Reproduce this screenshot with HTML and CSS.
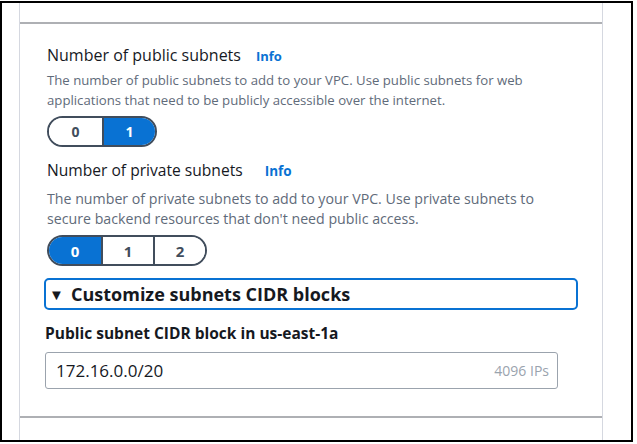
FILE: index.html
```html
<!DOCTYPE html>
<html lang="en">
<head>
<meta charset="utf-8">
<title>VPC subnets</title>
<link rel="stylesheet" href="styles.css">
</head>
<body>
<div class="frame">
  <div class="panel">
    <div class="panel-top"></div>
    <div class="section">
      <div class="field">
        <div class="label-row"><span class="label">Number of public subnets</span><a class="info">Info</a></div>
        <p class="desc">The number of public subnets to add to your VPC. Use public subnets for web<br>applications that need to be publicly accessible over the internet.</p>
        <div class="seg">
          <button class="seg-btn">0</button>
          <button class="seg-btn active">1</button>
        </div>
      </div>
      <div class="field field-2">
        <div class="label-row"><span class="label">Number of private subnets</span><a class="info">Info</a></div>
        <p class="desc">The number of private subnets to add to your VPC. Use private subnets to<br>secure backend resources that don't need public access.</p>
        <div class="seg">
          <button class="seg-btn active">0</button>
          <button class="seg-btn">1</button>
          <button class="seg-btn">2</button>
        </div>
      </div>
      <div class="expander"><span class="caret">&#9660;</span><span class="exp-title">Customize subnets CIDR blocks</span></div>
      <div class="cidr">
        <div class="cidr-label">Public subnet CIDR block in us-east-1a</div>
        <div class="input"><span class="input-value">172.16.0.0/20</span><span class="input-hint">4096 IPs</span></div>
      </div>
    </div>
    <div class="panel-bottom"></div>
  </div>
</div>
</body>
</html>
```
FILE: styles.css
```css
* { box-sizing: border-box; }
html, body { margin: 0; padding: 0; background: #fff; }
body { font-family: "Open Sans", "Noto Sans", sans-serif; color: #16191f; }

.frame {
  width: 633px;
  height: 441px;
  margin-top: 1px;
  border: 2px solid #000;
  padding-left: 17px;
  display: flex;
}

.panel {
  width: 584px;
  height: 100%;
  border-left: 1px solid #d5d8e0;
  border-right: 1px solid #d5d8e0;
  display: flex;
  flex-direction: column;
}

.panel-top {
  height: 21px;
  border-bottom: 2px solid #aeb0b4;
}

.section {
  padding: 20px 24px 0 25px;
  height: 394px;
  border-bottom: 2px solid #aeb0b4;
}

.panel-bottom { flex: 1; }

.field { padding-left: 2px; }
.field-2 { margin-top: 12px; }

.label-row {
  display: flex;
  align-items: baseline;
  height: 22px;
  line-height: 22px;
}
.label { font-size: 16px; color: #16191f; }
.field-2 .label { font-size: 15.6px; }
.info {
  margin-left: 15px;
  font-size: 13px;
  font-weight: 700;
  color: #0972d3;
}
.field-2 .info { margin-left: 22px; font-size: 13.5px; }

.desc {
  margin: 4px 0 6px;
  font-size: 13.2px;
  line-height: 20px;
  color: #5f6b7a;
}
.field-2 .desc { margin-top: 8px; font-size: 14.2px; }

.seg {
  display: inline-flex;
  height: 31px;
  border: 2px solid #414d5c;
  border-radius: 16px;
  overflow: hidden;
}
.seg-btn {
  width: 53px;
  border: 0;
  border-left: 2px solid #414d5c;
  background: #fff;
  font-family: inherit;
  font-size: 14px;
  font-weight: 700;
  color: #414d5c;
  padding: 0;
}
.field-2 .seg-btn { width: 52px; font-size: 15px; }
.seg-btn:first-child { border-left: 0; }
.seg-btn.active { background: #0972d3; color: #fff; }

.expander {
  margin-top: 12px;
  margin-left: -1px;
  width: 534px;
  height: 32px;
  border: 2px solid #0972d3;
  border-radius: 5px;
  display: flex;
  align-items: center;
  padding-left: 3px;
}
.caret { font-size: 15px; color: #16191f; width: 22px; line-height: 1; }
.exp-title { font-size: 18px; font-weight: 700; color: #16191f; }

.cidr { margin-top: 12px; }
.cidr-label {
  font-size: 15.5px;
  font-weight: 700;
  line-height: 22px;
  color: #16191f;
}
.input {
  margin-top: 8px;
  width: 513px;
  height: 37px;
  border: 1px solid #9ba3ad;
  border-radius: 3px;
  display: flex;
  align-items: center;
  justify-content: space-between;
  padding: 0 8px 0 10px;
}
.input-value { font-size: 17px; color: #16191f; }
.input-hint { font-size: 14px; color: #9aa3ae; }
```
